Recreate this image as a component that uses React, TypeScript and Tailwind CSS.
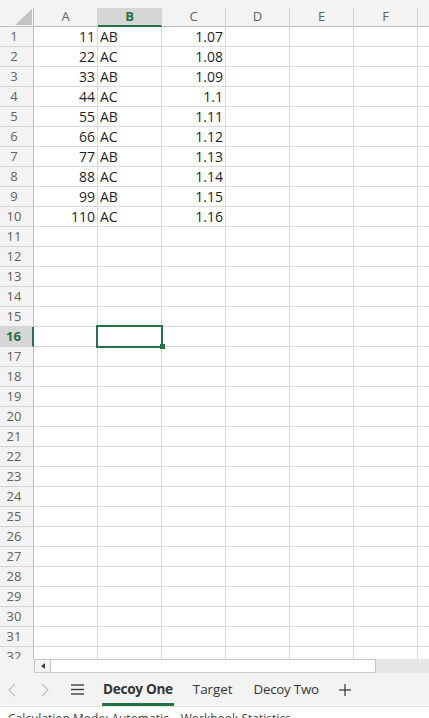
import React from "react";

const COLS = ["A", "B", "C", "D", "E", "F", ""];
const DATA: [string, string, string][] = [
  ["11", "AB", "1.07"],
  ["22", "AC", "1.08"],
  ["33", "AB", "1.09"],
  ["44", "AC", "1.1"],
  ["55", "AB", "1.11"],
  ["66", "AC", "1.12"],
  ["77", "AB", "1.13"],
  ["88", "AC", "1.14"],
  ["99", "AB", "1.15"],
  ["110", "AC", "1.16"],
];
const ROWS = Array.from({ length: 32 }, (_, i) => i + 1);

function HeaderRow() {
  return (
    <div className="flex h-[27px] items-end bg-[#f3f3f3]">
      <div className="relative h-[19px] w-[34px] shrink-0 border-b border-r border-[#bdbdbd]">
        <svg className="absolute left-[15px] top-[1px]" width="17" height="16" viewBox="0 0 17 16">
          <polygon points="17,0 17,16 0,16" fill="#c4c4c4" />
        </svg>
      </div>
      {COLS.map((c, i) =>
        c === "B" ? (
          <div
            key={i}
            className="flex h-[19px] w-[64px] shrink-0 items-center justify-center border-r border-[#d4d4d4] border-b-2 border-b-[#217346] bg-[#d6d6d6] pt-[1px] text-[13px] font-bold text-[#217346]"
          >
            {c}
          </div>
        ) : (
          <div
            key={i}
            className="flex h-[19px] w-[64px] shrink-0 items-center justify-center border-r border-b border-[#d4d4d4] border-b-[#bdbdbd] text-[13px] text-[#616161]"
          >
            {c}
          </div>
        )
      )}
    </div>
  );
}

function Row({ n }: { n: number }) {
  const d = DATA[n - 1];
  const sel = n === 16;
  return (
    <div className="flex h-[20px]">
      {sel ? (
        <div className="flex h-[20px] w-[34px] shrink-0 items-center justify-center border-b border-[#d4d4d4] border-r-2 border-r-[#217346] bg-[#d6d6d6] pr-[5px] text-[13px] font-bold text-[#217346]">
          {n}
        </div>
      ) : (
        <div className="flex h-[20px] w-[34px] shrink-0 items-center justify-center border-b border-r border-[#d4d4d4] border-r-[#bdbdbd] bg-[#f3f3f3] pr-[5px] text-[13px] text-[#616161]">
          {n}
        </div>
      )}
      {COLS.map((c, i) => (
        <div
          key={i}
          className={
            "flex h-[20px] w-[64px] shrink-0 items-center border-b border-r border-[#d9d9d9] text-[14px] text-[#1f1f1f] " +
            (i === 1 ? "justify-start pl-[2px]" : "justify-end pr-[2px]")
          }
        >
          {d && i < 3 ? d[i] : ""}
        </div>
      ))}
    </div>
  );
}

export default function App() {
  return (
    <div
      className="flex h-[718px] w-[429px] flex-col overflow-hidden bg-white"
      style={{ fontFamily: '"Open Sans", "Noto Sans", sans-serif' }}
    >
      <div className="relative h-[659px] shrink-0 overflow-hidden">
        <HeaderRow />
        {ROWS.map((n) => (
          <Row key={n} n={n} />
        ))}
        <div className="absolute left-[96px] top-[325px] h-[23px] w-[67px] border-2 border-[#217346]" />
        <div className="absolute left-[160px] top-[344px] h-[5px] w-[5px] bg-[#217346]" />
      </div>

      <div className="flex h-[14px] shrink-0 bg-[#f3f3f3]">
        <div className="w-[34px] shrink-0" />
        <div className="flex h-[14px] w-[17px] shrink-0 items-center justify-center border border-[#c6c6c6] bg-[#f3f3f3]">
          <svg width="4" height="6" viewBox="0 0 4 6">
            <polygon points="4,0 4,6 0,3" fill="#404040" />
          </svg>
        </div>
        <div className="h-[14px] w-[325px] shrink-0 border border-l-0 border-[#c6c6c6] bg-white" />
        <div className="flex-1 bg-[#e6e6e6]" />
      </div>

      <div className="flex h-[33px] shrink-0 items-center bg-[#f3f3f3] text-[13.3px] text-[#333]">
        <div className="flex w-[24px] shrink-0 justify-center">
          <svg width="10" height="14" viewBox="0 0 10 14" fill="none" stroke="#c2c2c2" strokeWidth="1.2">
            <polyline points="8,1 2,7 8,13" />
          </svg>
        </div>
        <div className="ml-[9px] flex w-[24px] shrink-0 justify-center">
          <svg width="10" height="14" viewBox="0 0 10 14" fill="none" stroke="#c2c2c2" strokeWidth="1.2">
            <polyline points="2,1 8,7 2,13" />
          </svg>
        </div>
        <div className="ml-[8px] flex w-[24px] shrink-0 justify-center">
          <svg width="13" height="11" viewBox="0 0 13 11" stroke="#333" strokeWidth="1.3">
            <line x1="0" y1="1" x2="13" y2="1" />
            <line x1="0" y1="5.5" x2="13" y2="5.5" />
            <line x1="0" y1="10" x2="13" y2="10" />
          </svg>
        </div>
        <div className="relative ml-[13px] flex h-[33px] items-center px-[1px] font-bold text-[#333]">
          <span className="text-[13.6px] tracking-[-0.3px]">Decoy One</span>
          <div className="absolute bottom-0 left-0 right-0 h-[3px] bg-[#217346]" />
        </div>
        <div className="ml-[19px] flex h-[33px] items-center">Target</div>
        <div className="ml-[21px] flex h-[33px] items-center tracking-[-0.2px]">Decoy Two</div>
        <div className="ml-[20px] flex items-center">
          <svg width="12" height="12" viewBox="0 0 12 12" stroke="#333" strokeWidth="1.2">
            <line x1="6" y1="0" x2="6" y2="12" />
            <line x1="0" y1="6" x2="12" y2="6" />
          </svg>
        </div>
      </div>

      <div className="flex-1 border-t border-[#e1e1e1] bg-white pl-[8px] pt-[4px] text-[12px] leading-[16px] text-[#444]">
        <span>Calculation Mode: Automatic</span>
        <span className="ml-[12px]">Workbook Statistics</span>
      </div>
    </div>
  );
}
